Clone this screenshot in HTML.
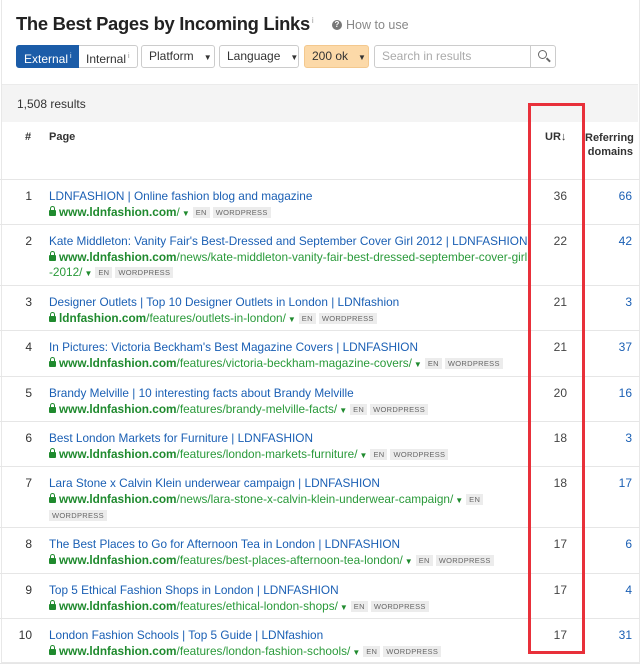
<!DOCTYPE html><html><head><style>
body{margin:0;width:640px;height:664px;overflow:hidden;background:#fff;font-family:"Liberation Sans",sans-serif;position:relative}
.a{position:absolute}
h1{position:absolute;left:16px;top:13px;margin:0;font-size:18.4px;font-weight:bold;color:#222;letter-spacing:-0.3px;white-space:nowrap}
.btn{position:absolute;top:45px;border:1px solid #ccc;border-radius:3px;font-size:12px;color:#333;line-height:21px;box-sizing:border-box;height:23px;padding-left:7px;white-space:nowrap;overflow:hidden}
.row{position:absolute;left:0;width:640px;border-top:1px solid #e6e6e6}
.n{position:absolute;left:18px;width:14px;text-align:right;font-size:12px;color:#333;top:9px}
.t{position:absolute;left:49px;top:9px;font-size:11.8px;color:#1a5fb4;white-space:nowrap}
.u{position:absolute;left:49px;top:25px;font-size:11.8px;color:#2a9a3a;white-space:nowrap;width:482px;overflow:hidden;line-height:15px}
.u b{color:#1f8a2e}
.tag{display:inline-block;background:#ececec;color:#666;font-size:7.5px;padding:0 3px;line-height:11px;margin-left:3px;vertical-align:1px;letter-spacing:.3px}
.ur{position:absolute;left:530px;width:37px;text-align:right;top:9px;font-size:12px;color:#444}
.rd{position:absolute;left:590px;width:42px;text-align:right;top:9px;font-size:12px;color:#1a5fb4}
.lk{display:inline-block;width:7px;height:6px;background:#1f8a2e;border-radius:1px;margin-right:3px;position:relative;vertical-align:0}
.lk:before{content:"";position:absolute;left:1px;top:-4px;width:3px;height:4px;border:1px solid #1f8a2e;border-bottom:0;border-radius:3px 3px 0 0}
.ar{font-size:8px;color:#1f8a2e;margin-left:2px}
</style></head><body>
<div class="a" style="left:1px;top:0;width:637px;height:662px;border:1px solid #e8e8e8;border-top:0"></div>
<h1>The Best Pages by Incoming Links<sup style="font-size:8px;color:#999;font-weight:normal"> i</sup></h1>
<div class="a" style="left:332px;top:20px;width:10px;height:10px;border-radius:50%;background:#777;color:#fff;font-size:8px;text-align:center;line-height:10px;font-weight:bold">?</div>
<div class="a" style="left:346px;top:18px;font-size:12.5px;color:#888">How to use</div>
<div class="btn" style="left:16px;width:63px;background:#1b5ca8;border-color:#1b5ca8;color:#fff;border-radius:3px 0 0 3px">External<sup style="font-size:7px"> i</sup></div>
<div class="btn" style="left:79px;width:59px;border-radius:0 3px 3px 0;border-left:0">Internal<sup style="font-size:7px;color:#888"> i</sup></div>
<div class="btn" style="left:141px;width:74px">Platform&nbsp;&nbsp; <span style="font-size:8px">▼</span></div>
<div class="btn" style="left:219px;width:80px">Language&nbsp;&nbsp; <span style="font-size:8px">▼</span></div>
<div class="btn" style="left:304px;width:65px;background:#fcd9a8;border-color:#f3c88e">200 ok&nbsp;&nbsp; <span style="font-size:8px">▼</span></div>
<div class="btn" style="left:374px;width:182px;color:#aaa">Search in results</div>
<div class="a" style="left:530px;top:46px;width:1px;height:21px;background:#ccc"></div>
<div class="a" style="left:538px;top:50px;width:7px;height:7px;border:1.5px solid #666;border-radius:50%"></div>
<div class="a" style="left:546px;top:59px;width:5px;height:1.5px;background:#666;transform:rotate(45deg)"></div>
<div class="a" style="left:2px;top:84px;width:636px;height:37px;background:#f4f4f4;border-top:1px solid #ebebeb"></div>
<div class="a" style="left:17px;top:97px;font-size:12px;color:#333">1,508 results</div>
<div class="a" style="left:25px;top:131px;font-size:11px;font-weight:bold;color:#333">#</div>
<div class="a" style="left:49px;top:131px;font-size:11px;font-weight:bold;color:#333">Page</div>
<div class="a" style="left:545px;top:131px;font-size:11px;font-weight:bold;color:#333">UR&#8595;</div>
<div class="a" style="left:585px;top:131px;font-size:11px;font-weight:bold;color:#333;text-align:right;width:48px;line-height:14px">Referring domains</div>

<div class="row" style="top:179px;height:45px"><div class="n">1</div><div class="t">LDNFASHION | Online fashion blog and magazine</div><div class="u"><span class="lk"></span><b>www.ldnfashion.com</b>/<span class="ar">▼</span><span class="tag">EN</span><span class="tag">WORDPRESS</span></div><div class="ur">36</div><div class="rd">66</div></div>
<div class="row" style="top:224px;height:61px"><div class="n">2</div><div class="t">Kate Middleton: Vanity Fair's Best-Dressed and September Cover Girl 2012 | LDNFASHION</div><div class="u"><span class="lk"></span><b>www.ldnfashion.com</b>/news/kate-middleton-vanity-fair-best-dressed-september-cover-girl<br>-2012/<span class="ar">▼</span><span class="tag">EN</span><span class="tag">WORDPRESS</span></div><div class="ur">22</div><div class="rd">42</div></div>
<div class="row" style="top:285px;height:45px"><div class="n">3</div><div class="t">Designer Outlets | Top 10 Designer Outlets in London | LDNfashion</div><div class="u"><span class="lk"></span><b>ldnfashion.com</b>/features/outlets-in-london/<span class="ar">▼</span><span class="tag">EN</span><span class="tag">WORDPRESS</span></div><div class="ur">21</div><div class="rd">3</div></div>
<div class="row" style="top:330px;height:46px"><div class="n">4</div><div class="t">In Pictures: Victoria Beckham's Best Magazine Covers | LDNFASHION</div><div class="u"><span class="lk"></span><b>www.ldnfashion.com</b>/features/victoria-beckham-magazine-covers/<span class="ar">▼</span><span class="tag">EN</span><span class="tag">WORDPRESS</span></div><div class="ur">21</div><div class="rd">37</div></div>
<div class="row" style="top:376px;height:45px"><div class="n">5</div><div class="t">Brandy Melville | 10 interesting facts about Brandy Melville</div><div class="u"><span class="lk"></span><b>www.ldnfashion.com</b>/features/brandy-melville-facts/<span class="ar">▼</span><span class="tag">EN</span><span class="tag">WORDPRESS</span></div><div class="ur">20</div><div class="rd">16</div></div>
<div class="row" style="top:421px;height:45px"><div class="n">6</div><div class="t">Best London Markets for Furniture | LDNFASHION</div><div class="u"><span class="lk"></span><b>www.ldnfashion.com</b>/features/london-markets-furniture/<span class="ar">▼</span><span class="tag">EN</span><span class="tag">WORDPRESS</span></div><div class="ur">18</div><div class="rd">3</div></div>
<div class="row" style="top:466px;height:61px"><div class="n">7</div><div class="t">Lara Stone x Calvin Klein underwear campaign | LDNFASHION</div><div class="u"><span class="lk"></span><b>www.ldnfashion.com</b>/news/lara-stone-x-calvin-klein-underwear-campaign/<span class="ar">▼</span><span class="tag">EN</span><br><span class="tag" style="margin-left:0">WORDPRESS</span></div><div class="ur">18</div><div class="rd">17</div></div>
<div class="row" style="top:527px;height:46px"><div class="n">8</div><div class="t">The Best Places to Go for Afternoon Tea in London | LDNFASHION</div><div class="u"><span class="lk"></span><b>www.ldnfashion.com</b>/features/best-places-afternoon-tea-london/<span class="ar">▼</span><span class="tag">EN</span><span class="tag">WORDPRESS</span></div><div class="ur">17</div><div class="rd">6</div></div>
<div class="row" style="top:573px;height:45px"><div class="n">9</div><div class="t">Top 5 Ethical Fashion Shops in London | LDNFASHION</div><div class="u"><span class="lk"></span><b>www.ldnfashion.com</b>/features/ethical-london-shops/<span class="ar">▼</span><span class="tag">EN</span><span class="tag">WORDPRESS</span></div><div class="ur">17</div><div class="rd">4</div></div>
<div class="row" style="top:618px;height:44px;border-bottom:1px solid #e6e6e6"><div class="n" style="left:14px;width:18px">10</div><div class="t">London Fashion Schools | Top 5 Guide | LDNfashion</div><div class="u"><span class="lk"></span><b>www.ldnfashion.com</b>/features/london-fashion-schools/<span class="ar">▼</span><span class="tag">EN</span><span class="tag">WORDPRESS</span></div><div class="ur">17</div><div class="rd">31</div></div>

<div class="a" style="left:528px;top:103px;width:51px;height:545px;border:3px solid #e8303a"></div>
</body></html>
